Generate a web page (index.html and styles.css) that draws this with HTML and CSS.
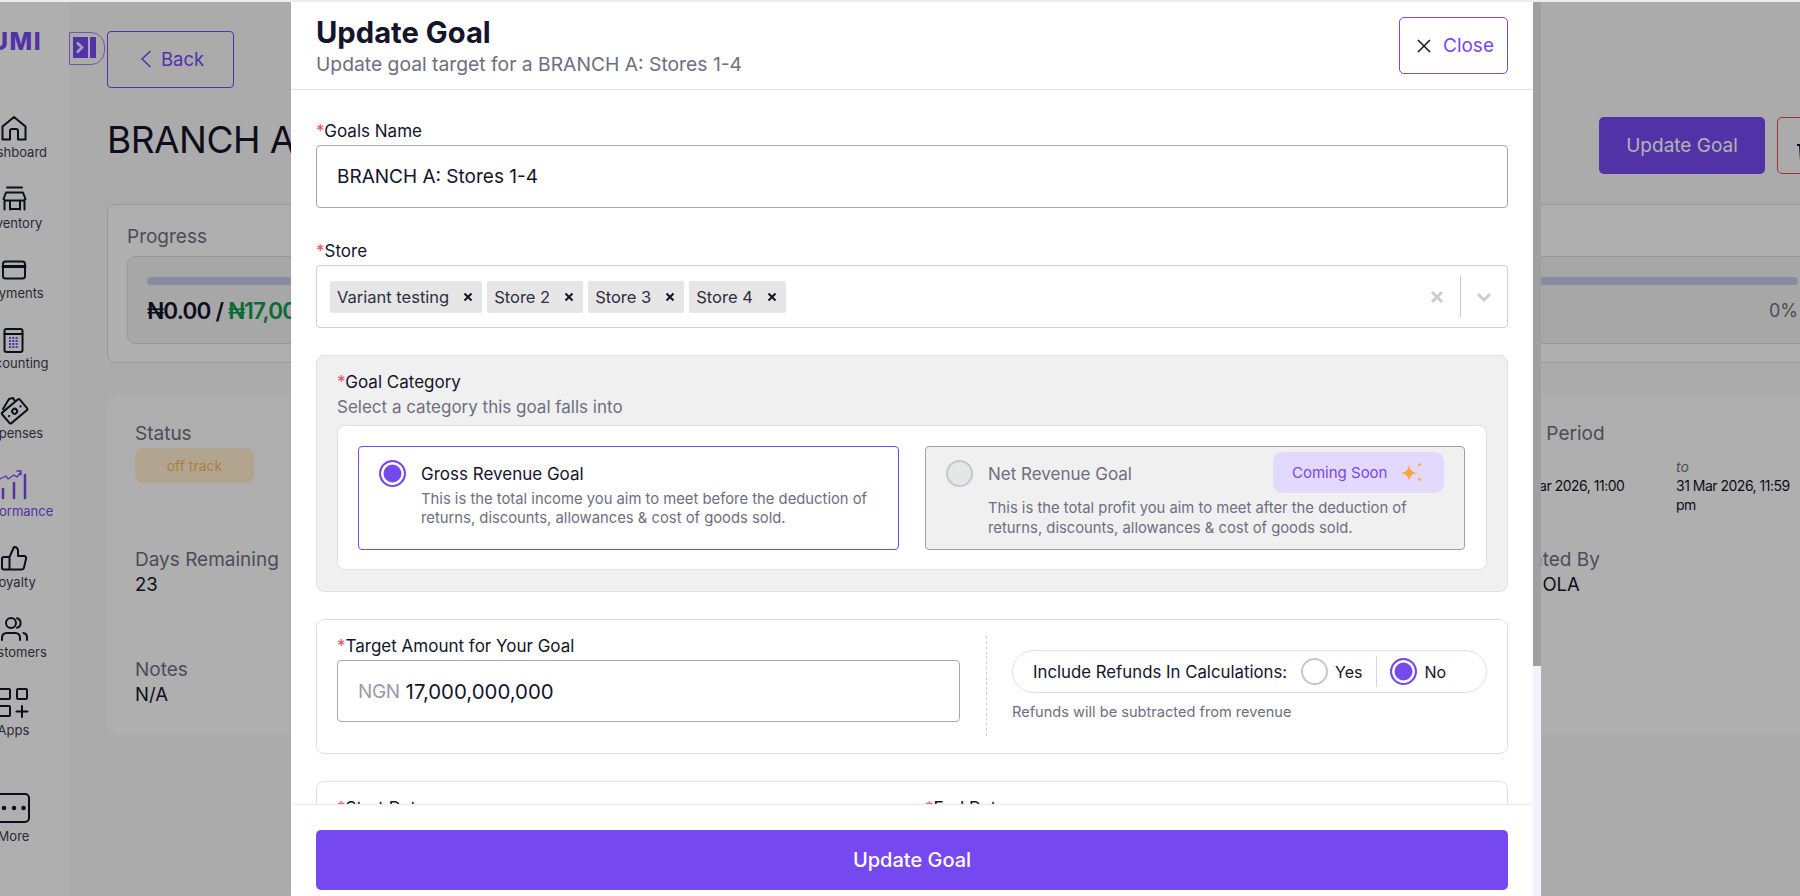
FILE: index.html
```html
<!DOCTYPE html>
<html lang="en">
<head>
<meta charset="utf-8">
<title>Update Goal</title>
<link rel="stylesheet" href="styles.css">
</head>
<body>
<div class="topline"></div>
<div class="app">
  <aside class="sidebar">
    <div class="logo">UMI</div>
    <nav class="nav">
      <a class="nav-item"><svg class="nav-icon" viewBox="0 0 28 28"><path d="M2.500 24.500V11.500L14 2l11.500 9.500V24.500H18V16a2 2 0 0 0-2-2h-4a2 2 0 0 0-2 2v8.500z"/></svg><span>Dashboard</span></a>
      <a class="nav-item"><svg class="nav-icon" viewBox="0 0 28 28"><path d="M7 1.500h15M6 6.500h17l2.500 6.500a3 3 0 0 1-3 1.500H6.500a3 3 0 0 1-3-1.500zM4.500 15v8.500M24.500 15v8.500M10 23.500V15M20 15v8.500M10 23h10"/></svg><span>Inventory</span></a>
      <a class="nav-item"><svg class="nav-icon" viewBox="0 0 28 28"><rect x="3" y="5.500" width="22" height="17" rx="2.500"/><path class="thick" d="M3 10.500h22"/></svg><span>Payments</span></a>
      <a class="nav-item"><svg class="nav-icon" viewBox="0 0 28 28"><rect x="4.500" y="3" width="18" height="23" rx="2"/><path d="M4.500 8h18"/><path class="dots" d="M9 12h10M9 15h10M9 18h10M9 21h10"/></svg><span>Accounting</span></a>
      <a class="nav-item"><svg class="nav-icon" viewBox="0 0 28 28"><g transform="rotate(-40 15 15)"><rect x="3" y="8" width="23" height="14" rx="1.500"/><circle cx="14.500" cy="15" r="2.500"/><path d="M7 15h.5M22 15h.5"/></g><path d="M3 13L9 3l4-1 2 3"/></svg><span>Expenses</span></a>
      <a class="nav-item nav-item-tall active"><svg class="nav-icon" viewBox="0 0 28 28"><path d="M3 15v9M14 9v15M25 1v23"/><path class="thin" d="M0 5l6 -3 2 3 6-4 3 2 4-5M17 -3l4 0 0 4"/></svg><span>Performance</span></a>
      <a class="nav-item"><svg class="nav-icon" viewBox="0 0 28 28"><path d="M9.500 12L14 2c3 0 4 2 4 4v5h6c1.500 0 2.500 1 2 3l-2 8.500c-.3 1.200-1 2-2.500 2H9.500zM9.500 12H4c-1.500 0-2 .8-2 2v8.500c0 1.200.6 2 2 2h5.500"/></svg><span>Loyalty</span></a>
      <a class="nav-item"><svg class="nav-icon" viewBox="0 0 28 28"><circle cx="11" cy="8" r="5"/><path d="M17 3.200a5 5 0 0 1 0 9.600M2 25v-2c0-3 2-5 5-5h8c3 0 5 2 5 5v2M23.500 18c2 .5 3.500 2 3.500 4v3"/></svg><span>Customers</span></a>
      <a class="nav-item nav-item-tall"><svg class="nav-icon" viewBox="0 0 28 28"><rect x="-1" y="-4" width="11" height="10" rx="1"/><rect x="17" y="-4" width="10" height="10" rx="1"/><rect x="-1" y="13" width="11" height="10" rx="1"/><path d="M22 13v11M16.500 18.500h11"/></svg><span>Apps</span></a>
      <a class="nav-item nav-item-more"><svg class="nav-icon" viewBox="0 0 28 28"><rect x="-3" y="-5" width="32" height="28" rx="4"/><path class="round" d="M4 9h.01M14 9h.01M23.500 9h.01"/></svg><span>More</span></a>
    </nav>
  </aside>

  <div class="collapse-tab">
    <svg viewBox="0 0 23 21" class="collapse-svg"><rect class="block" x="0" y="0" width="15" height="21"/><rect class="block" x="17" y="0" width="6" height="21"/><path d="M4 5.500l5 5-5 5"/></svg>
  </div>

  <main class="main">
    <a class="back-btn"><svg viewBox="0 0 12 18" class="back-chev"><path d="M10.500 1L2 9l8.500 8"/></svg>Back</a>
    <div class="page-head">
      <h1 class="page-title">BRANCH A: Stores 1-4</h1>
      <div class="page-actions">
        <button class="btn-primary">Update Goal</button>
        <button class="btn-delete"><svg viewBox="0 0 20 24" class="trash"><path d="M3 5h14l-1 16H4zM0 5h20"/></svg></button>
      </div>
    </div>
    <section class="progress-card">
      <div class="muted-label">Progress</div>
      <div class="progress-inner">
        <div class="progress-track"></div>
        <div class="progress-row">
          <div class="progress-amount">₦0.00 / <span class="green">₦17,000,000,000.00</span></div>
          <div class="progress-pct">0%</div>
        </div>
      </div>
    </section>
    <section class="stats-card">
      <div class="stat">
        <div class="muted-label">Status</div>
        <div class="status-pill">off track</div>
      </div>
      <div class="stat">
        <div class="muted-label">Goal Period</div>
        <div class="dates">
          <div class="date-col"><em>from</em>01 Mar 2026, 11:00 pm</div>
          <div class="date-col"><em>to</em>31 Mar 2026, 11:59 pm</div>
        </div>
      </div>
      <div class="stat">
        <div class="muted-label">Days Remaining</div>
        <div class="stat-value">23</div>
      </div>
      <div class="stat">
        <div class="muted-label">Created By</div>
        <div class="stat-value">ADE OLA</div>
      </div>
      <div class="stat">
        <div class="muted-label">Notes</div>
        <div class="stat-value">N/A</div>
      </div>
    </section>
  </main>
</div>

<div class="overlay">
  <div class="drawer">
    <header class="drawer-head">
      <div>
        <h2 class="drawer-title">Update Goal</h2>
        <p class="drawer-sub">Update goal target for a BRANCH A: Stores 1-4</p>
      </div>
      <button class="close-btn"><svg viewBox="0 0 14 14" class="close-x"><path d="M1 1l12 12M13 1L1 13"/></svg>Close</button>
    </header>
    <div class="drawer-body">
      <div class="field field-name">
        <label class="label"><i>*</i>Goals Name</label>
        <input class="text-input" value="BRANCH A: Stores 1-4">
      </div>
      <div class="field field-store">
        <label class="label"><i>*</i>Store</label>
        <div class="select">
          <div class="tags">
            <span class="tag">Variant testing<svg class="tag-x" viewBox="0 0 10 10"><path d="M1.500 1.500l7 7M8.500 1.500l-7 7"/></svg></span>
            <span class="tag">Store 2<svg class="tag-x" viewBox="0 0 10 10"><path d="M1.500 1.500l7 7M8.500 1.500l-7 7"/></svg></span>
            <span class="tag">Store 3<svg class="tag-x" viewBox="0 0 10 10"><path d="M1.500 1.500l7 7M8.500 1.500l-7 7"/></svg></span>
            <span class="tag">Store 4<svg class="tag-x" viewBox="0 0 10 10"><path d="M1.500 1.500l7 7M8.500 1.500l-7 7"/></svg></span>
          </div>
          <svg class="sel-clear" viewBox="0 0 14 14"><path d="M2 2l10 10M12 2L2 12"/></svg>
          <span class="sel-sep"></span>
          <svg class="sel-chev" viewBox="0 0 16 10"><path d="M2 2l6 6 6-6"/></svg>
        </div>
      </div>
      <section class="category">
        <label class="label"><i>*</i>Goal Category</label>
        <p class="category-sub">Select a category this goal falls into</p>
        <div class="category-inner">
          <div class="option option-on">
            <span class="radio radio-on"></span>
            <div>
              <div class="option-title">Gross Revenue Goal</div>
              <p class="option-desc">This is the total income you aim to meet before the deduction of returns, discounts, allowances &amp; cost of goods sold.</p>
            </div>
          </div>
          <div class="option option-off">
            <span class="radio radio-off"></span>
            <div>
              <div class="option-title">Net Revenue Goal</div>
              <p class="option-desc">This is the total profit you aim to meet after the deduction of returns, discounts, allowances &amp; cost of goods sold.</p>
            </div>
            <span class="soon">Coming Soon<svg class="sparkle" viewBox="0 0 24 22"><path d="M9 3c.8 4.500 2.500 7 8 8-5.500 1-7.200 3.500-8 8-.8-4.500-2.500-7-8-8 5.500-1 7.200-3.500 8-8zM19.500 0c.3 1.500.9 2.200 2.500 2.500-1.600.3-2.200 1-2.500 2.500-.3-1.500-.9-2.200-2.500-2.500 1.600-.3 2.200-1 2.500-2.500zM19.500 15c.3 1.500.9 2.200 2.500 2.500-1.600.3-2.200 1-2.500 2.500-.3-1.500-.9-2.200-2.500-2.500 1.600-.3 2.200-1 2.500-2.500z"/></svg></span>
          </div>
        </div>
      </section>
      <section class="target">
        <div class="target-left">
          <label class="label"><i>*</i>Target Amount for Your Goal</label>
          <div class="amount-input"><span class="currency">NGN</span>17,000,000,000</div>
        </div>
        <div class="dash"></div>
        <div class="target-right">
          <div class="refund-pill">
            <span class="refund-text">Include Refunds In Calculations:</span>
            <span class="radio radio-blank"></span><span class="refund-opt">Yes</span>
            <span class="refund-sep"></span>
            <span class="radio radio-on"></span><span class="refund-opt">No</span>
          </div>
          <p class="refund-hint">Refunds will be subtracted from revenue</p>
        </div>
      </section>
      <section class="dates-box">
        <label class="label"><i>*</i>Start Date</label>
        <label class="label"><i>*</i>End Date</label>
      </section>
    </div>
    <footer class="drawer-foot">
      <button class="submit-btn">Update Goal</button>
    </footer>
  </div>
  <div class="scroll-track"><div class="scroll-thumb"></div></div>
</div>
</body>
</html>
```

FILE: styles.css
```css
* { box-sizing: border-box; }
html, body { margin: 0; padding: 0; height: 100%; overflow: hidden; }
body {
  font-family: "Inter", "Liberation Sans", sans-serif;
  color: #14142b;
  background: #f5f5f5;
  font-size: 17px;
}
h1, h2, p { margin: 0; }
button { font: inherit; cursor: pointer; }
i { font-style: normal; color: #ef4a5f; }

.topline { height: 2px; background: #f1eaee; }
.app { display: flex; height: 894px; overflow: hidden; }

/* Sidebar, scrolled part-way off the left edge */
.sidebar {
  flex: none;
  width: 111px;
  margin-left: -42px;
  background: #fbfbfb;
  position: relative;
}
.logo {
  position: absolute;
  right: 27px;
  top: 27px;
  font-size: 24px;
  font-weight: 800;
  line-height: 26px;
  letter-spacing: 1.500px;
  color: #7548f0;
}
.nav { display: flex; flex-direction: column; padding-top: 88px; }
.nav-item {
  height: 70.25px;
  display: flex;
  flex-direction: column;
  align-items: center;
  justify-content: flex-end;
  gap: 1px;
  font-size: 13px;
  line-height: 16px;
  color: #3b3b50;
}
.nav-item-tall { height: 78px; }
.nav-item-more { margin-top: 35.5px; }
.nav-item.active { color: #7548f0; }
.nav-icon {
  width: 28px;
  height: 28px;
  overflow: visible;
  fill: none;
  stroke: #14142b;
  stroke-width: 2;
  stroke-linejoin: round;
  stroke-linecap: round;
}
.nav-icon .thick { stroke-width: 3; }
.nav-icon .round { stroke-width: 4.500; }
.nav-icon .dots { stroke: #7548f0; stroke-width: 2; stroke-dasharray: 2 1.300; stroke-linecap: butt; }
.active .nav-icon { stroke: #7548f0; stroke-width: 2.500; }
.active .nav-icon .thin { stroke-width: 1.300; }

.collapse-tab {
  position: absolute;
  left: 69px;
  top: 32px;
  width: 36px;
  height: 33px;
  border: 1.500px solid #9c7ff2;
  border-radius: 0 14px 14px 0;
  padding: 4px 7px 4px 3px;
  z-index: 1;
}
.collapse-svg { display: block; width: 23px; height: 21px; }
.collapse-svg .block { fill: #7548f0; }
.collapse-svg path { fill: none; stroke: #f1eaff; stroke-width: 2.500; }

.main { flex: 1; min-width: 0; padding: 29px 0 0 38px; }
.back-btn {
  width: 127px;
  height: 57px;
  padding: 0 0 2px 3px;
  border: 1px solid #7548f0;
  border-radius: 4px;
  display: flex;
  align-items: center;
  justify-content: center;
  gap: 9px;
  font-size: 18.500px;
  color: #7548f0;
}
.back-chev { width: 12px; height: 18px; fill: none; stroke: #7548f0; stroke-width: 1.500; }
.page-head { display: flex; align-items: center; justify-content: space-between; height: 57px; margin-top: 29px; margin-right: -40px; }
.page-title { font-size: 37px; font-weight: 400; letter-spacing: -0.5px; line-height: 44px; margin-bottom: 12px; color: #14142b; }
.page-actions { display: flex; gap: 12px; }
.btn-primary {
  width: 166px;
  height: 57px;
  background: #7548f0;
  color: #fff;
  border: 0;
  border-radius: 5px;
  font-size: 19px;
}
.btn-delete {
  width: 63px;
  height: 57px;
  border: 1px solid #e6484d;
  border-radius: 5px;
  background: none;
  padding: 16px 0 0 19px;
  text-align: left;
}
.trash { width: 20px; height: 24px; fill: none; stroke: #14142b; stroke-width: 2; }

.muted-label { font-size: 19px; line-height: 22px; color: #6e6e80; }
.progress-card {
  margin: 30px -38px 0 0;
  height: 159px;
  padding: 21px 19px 19px 19px;
  border: 1px solid #dcdcdc;
  border-radius: 8px;
  background: #fbfbfb;
}
.progress-inner {
  margin-top: 8px;
  height: 88px;
  padding: 20px 19px;
  background: #f0f0f0;
  border: 1px solid #dcdcdc;
  border-radius: 8px;
}
.progress-track { height: 8px; border-radius: 4px; background: #c9c6e3; }
.progress-row { display: flex; align-items: center; justify-content: space-between; margin-top: 11px; height: 28px; }
.progress-amount { font-size: 22.500px; font-weight: 600; letter-spacing: -0.8px; }
.green { color: #0f9a4a; }
.progress-pct { font-size: 18px; color: #6e6e80; }

.stats-card {
  margin: 31px -38px 0 0;
  height: 341px;
  padding: 29px 0 0 28px;
  background: #fbfbfb;
  border-radius: 12px;
  display: grid;
  grid-template-columns: 1365px 1fr;
  grid-template-rows: 126px 110px 1fr;
}
.stat-value { font-size: 18.500px; line-height: 26px; color: #14142b; }
.status-pill {
  width: 119px;
  height: 35px;
  margin-top: 3px;
  border-radius: 8px;
  background: #ffeccf;
  color: #f7b757;
  font-size: 14px;
  line-height: 35px;
  text-align: center;
}
.dates { display: flex; gap: 44px; margin: 12px 0 0 10px; }
.date-col { width: 122px; font-size: 14px; line-height: 19px; letter-spacing: -0.5px; color: #14142b; }
.date-col em { display: block; font-size: 14px; letter-spacing: 0; color: #6e6e80; }

/* Dimmed layer and drawer */
.overlay {
  position: fixed;
  left: 0;
  right: 0;
  top: 2px;
  bottom: 0;
  background: rgba(0, 0, 0, 0.3);
  z-index: 5;
  display: flex;
  padding-left: 291px;
}
.drawer {
  width: 1242px;
  height: 100%;
  background: #fff;
  display: flex;
  flex-direction: column;
}
.scroll-track { width: 8px; background: #f3f1fb; }
.scroll-thumb { height: 664px; background: #a0a0a0; }
.drawer-head {
  flex: none;
  height: 88px;
  padding: 13px 25px 0 25px;
  border-bottom: 1px solid #e3e3e3;
  display: flex;
  justify-content: space-between;
  align-items: flex-start;
}
.drawer-title { font-size: 29.200px; font-weight: 700; line-height: 36px; color: #14142b; }
.drawer-sub { font-size: 19.300px; line-height: 24px; color: #6e6e80; margin-top: 1px; }
.close-btn {
  width: 109px;
  height: 57px;
  margin-top: 2px;
  border: 1px solid #7548f0;
  border-radius: 5px;
  background: #fff;
  color: #7548f0;
  font-size: 19px;
  display: flex;
  align-items: center;
  justify-content: center;
  gap: 12px;
  padding: 0 0 0 4px;
}
.close-x { width: 14px; height: 14px; fill: none; stroke: #14142b; stroke-width: 1.500; }

.drawer-body {
  flex: 1;
  min-height: 0;
  overflow: hidden;
  padding: 31px 25px 0;
  display: flex;
  flex-direction: column;
}
.label { display: block; font-size: 17px; line-height: 20px; color: #14142b; }
.field { flex: none; }
.field-store { margin-top: 33px; }
.text-input {
  display: block;
  width: 100%;
  height: 63px;
  margin-top: 4px;
  padding: 0 20px;
  border: 1px solid #a8a8a8;
  border-radius: 4px;
  background: #fff;
  color: #14142b;
  font: inherit;
  font-size: 19px;
  outline: none;
}
.select {
  height: 63px;
  margin-top: 4px;
  padding: 0 15px 0 13px;
  border: 1px solid #cfcfcf;
  border-radius: 4px;
  display: flex;
  align-items: center;
}
.tags { flex: 1; display: flex; gap: 5px; }
.tag {
  height: 32px;
  padding: 0 9px 0 7px;
  background: #e6e6e6;
  border-radius: 2px;
  font-size: 16.500px;
  color: #2e2e42;
  display: flex;
  align-items: center;
  gap: 14px;
}
.tag-x { width: 10px; height: 10px; fill: none; stroke: #14142b; stroke-width: 2; }
.sel-clear { width: 14px; height: 14px; fill: none; stroke: #cccccc; stroke-width: 3; }
.sel-sep { width: 1px; height: 41px; margin: 0 15px 0 16px; background: #cccccc; }
.sel-chev { width: 16px; height: 10px; fill: none; stroke: #cccccc; stroke-width: 3; }

.category {
  flex: none;
  height: 237px;
  margin-top: 27px;
  padding: 16px 20px;
  background: #f0f0f0;
  border: 1px solid #e0e0e0;
  border-radius: 8px;
}
.category-sub { margin-top: 5px; font-size: 17px; line-height: 20px; color: #6e6e80; }
.category-inner {
  margin-top: 8px;
  height: 145px;
  padding: 20px;
  background: #fff;
  border: 1px solid #e3e3e3;
  border-radius: 8px;
  display: grid;
  grid-template-columns: 541px 540px;
  gap: 26px;
}
.option {
  position: relative;
  display: flex;
  gap: 15px;
  padding: 13px 20px;
  border-radius: 4px;
  height: 104px;
}
.option-on { border: 1px solid #7548f0; background: #fff; }
.option-off { border: 1px solid #a0a0a0; background: #f0f0f0; }
.radio {
  flex: none;
  width: 27px;
  height: 27px;
  border-radius: 50%;
  background: #fff;
  border: 2.500px solid #c4c6d2;
  display: block;
}
.radio-on { border-color: #7548f0; background: #7548f0; box-shadow: inset 0 0 0 2.500px #fff; }
.radio-off { background: #e6e6e6; }
.option-title { font-size: 17px; line-height: 20px; margin-top: 4px; color: #14142b; }
.option-off .option-title { color: #6e6e80; }
.option-desc { font-size: 14.800px; line-height: 19px; margin-top: 6px; color: #6e6e80; width: 470px; }
.option-off .option-desc { margin-top: 14px; line-height: 20px; }
.soon {
  position: absolute;
  top: 5px;
  right: 20px;
  width: 171px;
  height: 41px;
  padding-left: 19px;
  background: #e3d9fd;
  border-radius: 9px;
  display: flex;
  align-items: center;
  gap: 13px;
  font-size: 15px;
  color: #7548f0;
}
.sparkle { width: 24px; height: 22px; fill: #f9a63a; }

.target {
  flex: none;
  height: 135px;
  margin-top: 27px;
  padding: 16px 20px;
  border: 1px solid #e0e0e0;
  border-radius: 8px;
  display: flex;
}
.target-left { flex: none; width: 623px; }
.amount-input {
  height: 62px;
  margin-top: 4px;
  padding: 0 20px;
  border: 1px solid #a8a8a8;
  border-radius: 4px;
  display: flex;
  align-items: center;
  font-size: 20.400px;
  color: #14142b;
}
.currency { color: #9a9aa8; margin-right: 6px; font-size: 19px; letter-spacing: -0.4px; }
.dash { flex: none; height: 100px; margin: 0 25px 0 26px; border-left: 1px dashed #d0d0d0; }
.target-right { flex: 1; padding-top: 14px; }
.refund-pill {
  height: 43px;
  padding-left: 20px;
  border: 1px solid #e0e0e0;
  border-radius: 22px;
  display: flex;
  align-items: center;
  font-size: 16.800px;
  color: #14142b;
}
.refund-text { width: 256px; margin-right: 12px; white-space: nowrap; }
.refund-opt { margin-left: 7px; font-size: 16px; }
.refund-sep { width: 1px; height: 31px; background: #d8d8d8; margin: 0 13px 0 14px; }
.refund-hint { margin-top: 9px; font-size: 14.600px; line-height: 20px; color: #6e6e80; }

.dates-box {
  flex: none;
  height: 120px;
  margin-top: 27px;
  padding: 16px 20px;
  border: 1px solid #e0e0e0;
  border-radius: 8px;
  display: grid;
  grid-template-columns: 588px 1fr;
}
.drawer-foot {
  flex: none;
  height: 92px;
  padding: 25px 25px 7px;
  background: #fff;
  border-top: 1px solid #ececec;
  box-shadow: 0 -1px 3px rgba(0, 0, 0, 0.03);
}
.submit-btn {
  width: 100%;
  height: 60px;
  border: 0;
  border-radius: 5px;
  background: #7548f0;
  color: #fff;
  font-size: 20px;
  font-weight: 500;
}
```
